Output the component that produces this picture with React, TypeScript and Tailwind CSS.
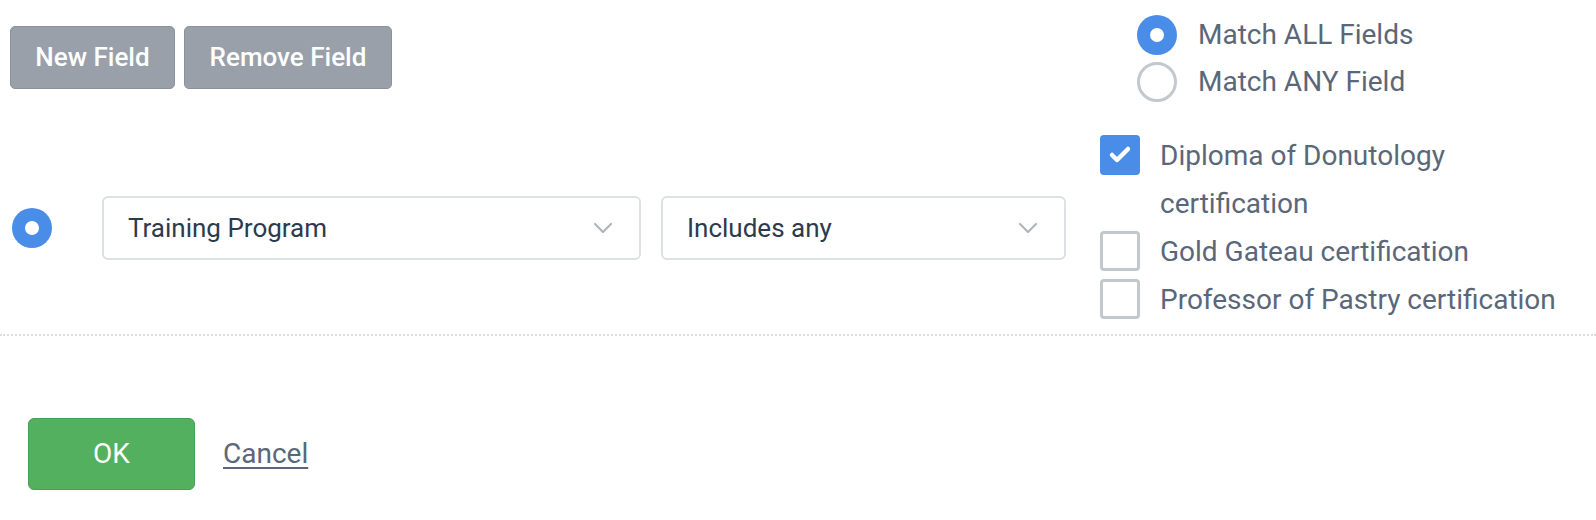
import { ChevronDown, Check } from "lucide-react";

const FONT = "font-['Roboto','Liberation_Sans',sans-serif]";

function Radio({ checked }: { checked?: boolean }) {
  return checked ? (
    <span className="w-10 h-10 rounded-full bg-[#4a8de8] flex items-center justify-center shrink-0">
      <span className="w-[14px] h-[14px] rounded-full bg-white" />
    </span>
  ) : (
    <span className="block w-10 h-10 rounded-full border-[3px] border-[#c3c8ce] bg-white shrink-0" />
  );
}

function Checkbox({ checked }: { checked?: boolean }) {
  return checked ? (
    <span className="w-10 h-10 rounded-[4px] bg-[#4a8de8] flex items-center justify-center shrink-0">
      <Check size={24} strokeWidth={4.5} className="text-white" />
    </span>
  ) : (
    <span className="block w-10 h-10 rounded-[4px] border-[3px] border-[#c3c8ce] bg-white shrink-0" />
  );
}

function Select({ value, width }: { value: string; width: string }) {
  return (
    <div
      className={`${width} h-16 border-2 border-[#dde0e4] rounded-md bg-white flex items-center justify-between pl-6 pr-5`}
    >
      <span className="text-[26px] text-[#2c3a4e]">{value}</span>
      <ChevronDown size={32} strokeWidth={1.6} className="text-[#b0b5bb]" />
    </div>
  );
}

const CERTS = [
  { label: "Diploma of Donutology certification", checked: true },
  { label: "Gold Gateau certification", checked: false },
  { label: "Professor of Pastry certification", checked: false },
];

export default function App() {
  return (
    <div className={`${FONT} w-full h-[520px] bg-white overflow-hidden`}>
      {/* top row */}
      <div className="flex h-[132px]">
        <div className="w-[1137px] flex gap-[9px] pl-[10px] pt-[26px] items-start">
          <button className="h-[63px] w-[165px] rounded-[5px] bg-[#9aa0a9] border border-[#8c929b] text-white text-[26px] font-medium">
            New Field
          </button>
          <button className="h-[63px] w-[208px] rounded-[5px] bg-[#9aa0a9] border border-[#8c929b] text-white text-[26px] font-medium">
            Remove Field
          </button>
        </div>
        <div className="pt-[11px] flex flex-col">
          {[
            { label: "Match ALL Fields", checked: true },
            { label: "Match ANY Field", checked: false },
          ].map((r) => (
            <label key={r.label} className="flex items-center gap-[21px] h-[47px]">
              <Radio checked={r.checked} />
              <span className="text-[28px] text-[#5a6779]">{r.label}</span>
            </label>
          ))}
        </div>
      </div>

      {/* criteria row */}
      <div className="flex items-center pb-[10px] border-b-2 border-dotted border-[#dcdfe2]">
        <div className="w-[102px] pl-[12px] flex">
          <Radio checked />
        </div>
        <Select value="Training Program" width="w-[539px]" />
        <div className="w-[20px]" />
        <Select value="Includes any" width="w-[405px]" />
        <div className="w-[34px]" />
        <div className="flex flex-col w-[460px]">
          {CERTS.map((c) => (
            <label key={c.label} className="flex items-start gap-5">
              <span className="block pt-[3px]">
                <Checkbox checked={c.checked} />
              </span>
              <span className="text-[28px] leading-[48px] text-[#5a6779] w-[400px]">{c.label}</span>
            </label>
          ))}
        </div>
      </div>

      {/* footer */}
      <div className="flex items-center gap-[28px] pl-[28px] pt-[82px]">
        <button className="w-[167px] h-[72px] rounded-[6px] bg-[#53b05e] border border-[#47a152] text-white text-[28px]">
          OK
        </button>
        <a href="#" className="text-[28px] text-[#5a6779] underline decoration-2 underline-offset-[4px]">
          Cancel
        </a>
      </div>
    </div>
  );
}
